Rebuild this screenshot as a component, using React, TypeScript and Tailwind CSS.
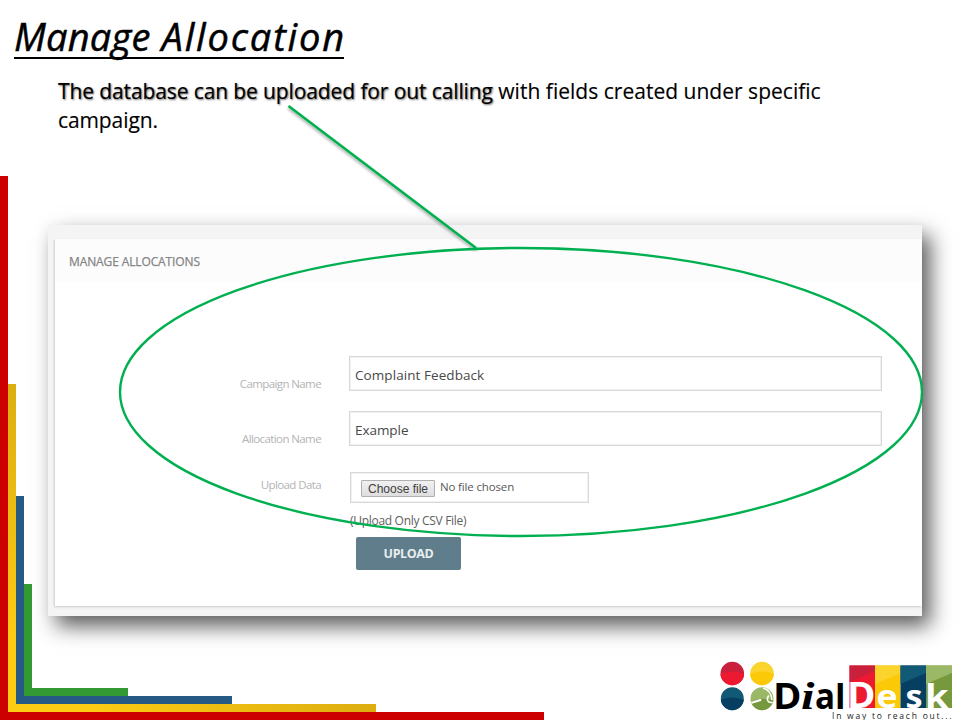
import React from "react";

function CornerStripes() {
  return (
    <svg className="pointer-events-none absolute inset-0" width="960" height="720" viewBox="0 0 960 720">
      <defs>
        <linearGradient id="goldV" x1="0" y1="0" x2="0" y2="1">
          <stop offset="0" stopColor="#dcae10" />
          <stop offset="0.8" stopColor="#fecb14" />
        </linearGradient>
        <linearGradient id="goldH" x1="0" y1="0" x2="1" y2="0">
          <stop offset="0.2" stopColor="#fecb14" />
          <stop offset="1" stopColor="#dcae10" />
        </linearGradient>
      </defs>
      <path d="M0 176h8v536h536v8H0z" fill="#c00" />
      <rect x="8" y="384" width="8" height="328" fill="url(#goldV)" />
      <rect x="8" y="704" width="368" height="8" fill="url(#goldH)" />
      <path d="M16 496h8v200h208v8H16z" fill="#265a84" />
      <path d="M24 584h8v104h96v8H24z" fill="#339933" />
    </svg>
  );
}

function Callout() {
  return (
    <svg className="pointer-events-none absolute inset-0" width="960" height="720" viewBox="0 0 960 720">
      <defs>
        <filter id="lineShadow" x="-10%" y="-10%" width="120%" height="120%">
          <feDropShadow dx="0" dy="2" stdDeviation="1.5" floodOpacity="0.38" />
        </filter>
      </defs>
      <path d="M288.500 106L476 248" stroke="#00b050" strokeWidth="2.600" filter="url(#lineShadow)" />
      <ellipse cx="521" cy="392" rx="401" ry="144" fill="none" stroke="#00b050" strokeWidth="2.400" />
    </svg>
  );
}

function Logo() {
  return (
    <svg className="absolute left-[712px] top-[656px]" width="248" height="64" viewBox="712 656 248 64">
      <defs>
        <clipPath id="dots">
          <circle cx="732.300" cy="673.500" r="11.800" />
          <circle cx="762" cy="673.500" r="11.800" />
          <circle cx="732.300" cy="698.700" r="11.500" />
          <circle cx="762" cy="698.700" r="11.500" />
        </clipPath>
      </defs>
      <g clipPath="url(#dots)">
        <path d="M720 661h25v25h-25z" fill="#c9203c" />
        <path d="M720 674Q732 669 745 674v12h-25z" fill="#ed1930" />
        <path d="M750 661h25v25h-25z" fill="#fbd32d" />
        <path d="M750 674Q762 669 775 674v12h-25z" fill="#fbc908" />
        <path d="M720 686h25v25h-25z" fill="#125975" />
        <path d="M720 700Q732 695 745 700v12h-25z" fill="#063f61" />
        <path d="M750 686h25v25h-25z" fill="#9bb866" />
        <path d="M750 702Q762 696 775 701v12h-25z" fill="#76993d" />
        <path d="M763 688Q771 690 772 700" stroke="#fff" strokeWidth="1.500" fill="none" />
        <path d="M751 703L760.500 700" stroke="#fff" strokeWidth="2" fill="none" strokeLinecap="round" />
        <path d="M768.500 696Q766 700 769 702L774 703" stroke="#fff" strokeWidth="1.600" fill="none" strokeLinecap="round" />
      </g>
      <path d="M849.500 665.500H875V708H849.500z" fill="#ed1930" />
      <path d="M849.500 665.500H875V671L849.500 682z" fill="#c9203c" />
      <path d="M875 665.500h25.500V708H875z" fill="#fbc908" />
      <path d="M875 665.500h25.500V673L875 684z" fill="#fbd32d" />
      <path d="M900.500 665.500H926V708h-25.500z" fill="#063f61" />
      <path d="M900.500 665.500H926V673L900.500 684z" fill="#125975" />
      <path d="M926 665.500h26V708h-26z" fill="#76993d" />
      <path d="M926 665.500h26V673L926 684z" fill="#9bb866" />
      <g className="font-['Open_Sans',sans-serif] font-bold" fontSize="35">
        <text x="773" y="708.500" textLength="28.500" lengthAdjust="spacingAndGlyphs">D</text>
        <text x="801" y="708.500" fontSize="37" className="font-['Liberation_Serif',serif] italic" textLength="13.500" lengthAdjust="spacingAndGlyphs">i</text>
        <text x="815" y="708.500" textLength="20" lengthAdjust="spacingAndGlyphs">a</text>
        <text x="835" y="708.500" fontSize="34" textLength="10.500" lengthAdjust="spacingAndGlyphs">l</text>
        <g fill="#fff">
          <text x="847" y="708" textLength="28.500" lengthAdjust="spacingAndGlyphs">D</text>
          <text x="876.500" y="707.500" fontSize="33" textLength="21" lengthAdjust="spacingAndGlyphs">e</text>
          <text x="905.500" y="707.500" fontSize="33" textLength="17" lengthAdjust="spacingAndGlyphs">s</text>
          <text x="925" y="707.500" fontSize="33" textLength="23.500" lengthAdjust="spacingAndGlyphs">k</text>
        </g>
      </g>
      <text x="832" y="718.500" fontSize="8.500" fill="#222" textLength="119.500" className="font-['Open_Sans',sans-serif]">In way to reach out...</text>
    </svg>
  );
}

function Field({ label, value, spacing }: { label: string; value: string; spacing: string }) {
  return (
    <div className="flex h-[35px]">
      <label className="mr-7 w-[266px] pt-[20px] text-right text-[11.5px] leading-4 tracking-[-0.6px] text-[#b4b4b4]">{label}</label>
      <div className={`h-[35px] w-[533px] border border-[#d8d8d8] pl-[5px] text-[13.5px] leading-[37px] text-[#484848] shadow-[inset_0_0_0_1px_#f1f1f1] ${spacing}`}>{value}</div>
    </div>
  );
}

function AllocationPanel() {
  return (
    <section className="ml-12 h-[391px] w-[874px] bg-[#f4f4f4] pl-[7px] pt-[14px] font-['Open_Sans','Noto_Sans',sans-serif] shadow-[8px_10px_20px_0px_rgba(0,0,0,0.65)]">
      <div className="h-[367px] bg-white shadow-[-1px_1px_2px_rgba(0,0,0,0.16)]">
        <h2 className="h-[43px] bg-[#fcfcfc] pl-[14px] text-[12px] leading-[45px] tracking-[-0.12px] text-[#808080] [-webkit-text-stroke:0.25px_#8b8b8b]">
          <span>MANAGE ALLOCATIONS</span>
        </h2>
        <div className="flex flex-col gap-5 pt-[74px]">
          <Field label="Campaign Name" value="Complaint Feedback" spacing="tracking-[0.07px]" />
          <Field label="Allocation Name" value="Example" spacing="tracking-[-0.05px]" />
        </div>
        <div className="mt-[26px] flex">
          <label className="mr-[29px] w-[266px] pt-[5px] text-right text-[11.5px] leading-4 tracking-[-0.6px] text-[#b4b4b4]">Upload Data</label>
          <div className="flex h-[31px] w-[239px] items-start border border-[#d8d8d8] pl-[10px] pt-[7px] text-[11.5px] leading-[18px] text-[#585858] shadow-[inset_0_0_0_1px_#f1f1f1]">
            <button className="mr-[5px] h-[17px] w-[74px] rounded-[1px] border border-[#b0b0b0] bg-linear-to-b from-[#f1f1f1] to-[#dedede] font-['Liberation_Sans',sans-serif] text-[12px] leading-[16px] text-[#404040]">Choose file</button>
            <span className="-mt-[2px] tracking-[-0.15px]">No file chosen</span>
          </div>
        </div>
        <p className="ml-[295px] mt-[9px] h-[18px] text-[12px] leading-[18px] tracking-[-0.3px] text-[#606060]"><span>(Upload Only CSV File)</span></p>
        <button className="ml-[301px] mt-[7px] block h-[33px] w-[105px] rounded-[2px] bg-[#607d8b] text-[12.5px] font-bold leading-[34px] tracking-[-0.4px] text-[#e8eef0]">UPLOAD</button>
      </div>
    </section>
  );
}

export default function App() {
  return (
    <main className="relative h-[720px] w-[960px] overflow-hidden bg-white text-black">
      <div className="flex flex-col">
        <h1 className="ml-[14px] mt-[15px] flex h-11 w-[330px] justify-between border-b-2 border-black whitespace-pre font-['Open_Sans',sans-serif] text-[38px] italic leading-[43px] [-webkit-text-stroke:0.5px_black]">
          <span className="tracking-[0.2px]">Manage </span>
          <span className="tracking-[1.85px] -mr-[2px]">Allocation</span>
        </h1>
        <p className="ml-[58px] mt-[18px] h-[58px] whitespace-nowrap font-['Open_Sans',sans-serif] text-[21px] leading-[29px] [-webkit-text-stroke:0.15px_black]">
          <span className="tracking-[-0.11px] [text-shadow:1px_1px_2px_rgba(0,0,0,0.6)]">The database can be uploaded for out calling</span>
          <span className="tracking-[0.02px]"> with fields created under specific</span>
          <br />
          <span className="tracking-[-0.1px]">campaign.</span>
        </p>
        <div className="pt-[90px]">
          <AllocationPanel />
        </div>
      </div>
      <CornerStripes />
      <Callout />
      <Logo />
    </main>
  );
}
